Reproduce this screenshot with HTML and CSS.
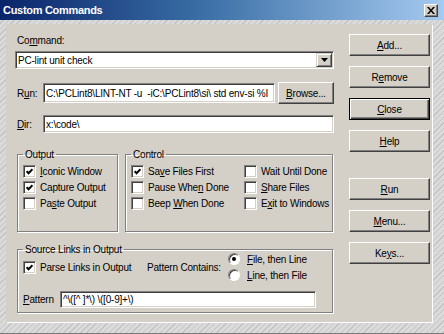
FILE: index.html
```html
<!DOCTYPE html>
<html lang="en">
<head>
    <meta charset="UTF-8">
    <title>Custom Commands</title>
    <link rel="stylesheet" href="styles.css">
</head>
<body>
    <div class="window">
        <div class="titlebar">
            <span class="title">Custom Commands</span>
            <span class="close-btn">
                <svg width="8" height="7" viewBox="0 0 8 7">
                    <path d="M0 0h2l2 2.4L6 0h2L5 3.5 8 7H6L4 4.6 2 7H0l3-3.5z" fill="#000"/>
                </svg>
            </span>
        </div>

        <div class="frame">
            <div class="panel">
                <div class="form">
                    <div class="label cmd-label">Co<u>m</u>mand:</div>
                    <div class="combo sunken">
                        <span class="combo-text">PC-lint unit check</span>
                        <span class="combo-drop">
                            <svg width="7" height="4" viewBox="0 0 7 4"><path d="M0 0h7L3.5 4z" fill="#000"/></svg>
                        </span>
                    </div>

                    <div class="field-row run-row">
                        <span class="label row-label">R<u>u</u>n:</span>
                        <div class="edit sunken run-edit">C:\PCLint8\LINT-NT -u  -iC:\PCLint8\si\ std env-si %I</div>
                        <button class="btn browse-btn"><u>B</u>rowse...</button>
                    </div>

                    <div class="field-row dir-row">
                        <span class="label row-label"><u>D</u>ir:</span>
                        <div class="edit sunken dir-edit">x:\code\</div>
                    </div>

                    <div class="groups">
                        <fieldset class="group output-group">
                            <legend>Output</legend>
                            <div class="check-item">
                                <span class="check sunken"><svg width="7" height="7" viewBox="0 0 7 7"><path d="M0.6 3.1 L2.6 5.2 L6.5 1.2" stroke="#000" stroke-width="2" fill="none"/></svg></span>
                                <span><u>I</u>conic Window</span>
                            </div>
                            <div class="check-item">
                                <span class="check sunken"><svg width="7" height="7" viewBox="0 0 7 7"><path d="M0.6 3.1 L2.6 5.2 L6.5 1.2" stroke="#000" stroke-width="2" fill="none"/></svg></span>
                                <span>Capture Output</span>
                            </div>
                            <div class="check-item">
                                <span class="check sunken"></span>
                                <span>Pa<u>s</u>te Output</span>
                            </div>
                        </fieldset>

                        <fieldset class="group control-group">
                            <legend>Control</legend>
                            <div class="check-grid">
                                <div class="check-item">
                                    <span class="check sunken"><svg width="7" height="7" viewBox="0 0 7 7"><path d="M0.6 3.1 L2.6 5.2 L6.5 1.2" stroke="#000" stroke-width="2" fill="none"/></svg></span>
                                    <span>Sa<u>v</u>e Files First</span>
                                </div>
                                <div class="check-item">
                                    <span class="check sunken"></span>
                                    <span>Pause Whe<u>n</u> Done</span>
                                </div>
                                <div class="check-item">
                                    <span class="check sunken"></span>
                                    <span>Beep <u>W</u>hen Done</span>
                                </div>
                                <div class="check-item">
                                    <span class="check sunken"></span>
                                    <span>Wait Until Done</span>
                                </div>
                                <div class="check-item">
                                    <span class="check sunken"></span>
                                    <span><u>S</u>hare Files</span>
                                </div>
                                <div class="check-item">
                                    <span class="check sunken"></span>
                                    <span>E<u>x</u>it to Windows</span>
                                </div>
                            </div>
                        </fieldset>
                    </div>

                    <fieldset class="group source-group">
                        <legend>Source Links in Output</legend>
                        <div class="source-top">
                            <div class="check-item parse-item">
                                <span class="check sunken"><svg width="7" height="7" viewBox="0 0 7 7"><path d="M0.6 3.1 L2.6 5.2 L6.5 1.2" stroke="#000" stroke-width="2" fill="none"/></svg></span>
                                <span>Parse Links in Output</span>
                            </div>
                            <span class="contains-label">Pattern Contains:</span>
                            <div class="radio-list">
                                <div class="radio-item">
                                    <span class="radio on"></span>
                                    <span><u>F</u>ile, then Line</span>
                                </div>
                                <div class="radio-item">
                                    <span class="radio"></span>
                                    <span><u>L</u>ine, then File</span>
                                </div>
                            </div>
                        </div>
                        <div class="pattern-row">
                            <span class="pattern-label"><u>P</u>attern</span>
                            <div class="edit sunken pattern-edit">^\([^ ]*\) \([0-9]+\)</div>
                        </div>
                    </fieldset>
                </div>

                <div class="buttons">
                    <button class="btn"><u>A</u>dd...</button>
                    <button class="btn">R<u>e</u>move</button>
                    <button class="btn btn-default"><u>C</u>lose</button>
                    <button class="btn"><u>H</u>elp</button>
                    <button class="btn run-btn"><u>R</u>un</button>
                    <button class="btn"><u>M</u>enu...</button>
                    <button class="btn">Ke<u>y</u>s...</button>
                </div>
            </div>
        </div>
    </div>
</body>
</html>
```

FILE: styles.css
```css
* {
    margin: 0;
    padding: 0;
    box-sizing: border-box;
}

body {
    font-family: 'Liberation Sans', Arial, sans-serif;
    font-size: 10px;
    letter-spacing: -0.2px;
    color: #000000;
    background: #d6d6d6;
}

u {
    text-decoration-thickness: 1px;
    text-underline-offset: 1px;
}

/* Window chrome */
.window {
    width: 444px;
    height: 334px;
    display: flex;
    flex-direction: column;
    background: repeating-linear-gradient(135deg, #c4c4c4 0 1px, #dadada 1px 4px);
    border-bottom: 1px solid #7a7a7a;
}

.titlebar {
    height: 20px;
    display: flex;
    justify-content: space-between;
    align-items: center;
    padding-left: 3px;
    background: linear-gradient(90deg, #0a246a 0%, #3a6ea5 45%, #a6caf0 100%);
}

.title {
    color: #FFFFFF;
    font-size: 11px;
    font-weight: bold;
    letter-spacing: -0.3px;
}

.close-btn {
    width: 14px;
    height: 13px;
    margin-right: 6px;
    display: flex;
    justify-content: center;
    align-items: center;
    background: #d4d0c8;
    border: 1px solid;
    border-color: #ffffff #404040 #404040 #ffffff;
    box-shadow: inset -1px -1px 0 #808080;
}

.frame {
    flex: 1;
    padding: 4px 0 0 6px;
}

.panel {
    width: 426px;
    height: 298px;
    display: flex;
    gap: 15px;
    padding: 10px 0 0 9px;
    background: #d4d0c8;
    box-shadow: 1px 1px 0 #ffffff;
}

/* Shared control styles */
.sunken {
    background: #ffffff;
    border: 1px solid;
    border-color: #808080 #ffffff #ffffff #808080;
    box-shadow: inset 1px 1px 0 #404040, inset -1px -1px 0 #d4d0c8;
}

.btn {
    height: 22px;
    font-family: inherit;
    font-size: 10px;
    letter-spacing: -0.2px;
    color: #000000;
    background: #d4d0c8;
    border: 1px solid;
    border-color: #ffffff #404040 #404040 #ffffff;
    box-shadow: inset -1px -1px 0 #808080;
}

.btn-default {
    border-color: #000000;
    box-shadow: inset 1px 1px 0 #ffffff, inset -1px -1px 0 #404040, inset -2px -2px 0 #808080;
}

.label {
    line-height: 13px;
}

/* Left form */
.form {
    width: 319px;
    display: flex;
    flex-direction: column;
}

.cmd-label {
    padding-left: 2px;
}

.combo {
    margin-top: 4px;
    height: 18px;
    display: flex;
    align-items: center;
}

.combo-text {
    flex: 1;
    padding-left: 2px;
}

.combo-drop {
    width: 16px;
    height: 14px;
    margin-right: 1px;
    display: flex;
    justify-content: center;
    align-items: center;
    background: #d4d0c8;
    border: 1px solid;
    border-color: #d4d0c8 #404040 #404040 #d4d0c8;
    box-shadow: inset 1px 1px 0 #ffffff, inset -1px -1px 0 #808080;
}

.field-row {
    display: flex;
    align-items: center;
}

.row-label {
    width: 28px;
    padding-left: 2px;
}

.edit {
    padding-left: 2px;
    white-space: pre;
    overflow: hidden;
    display: flex;
    align-items: center;
}

.run-row {
    margin-top: 13px;
    height: 22px;
}

.run-edit {
    width: 232px;
    height: 20px;
}

.browse-btn {
    width: 56px;
    margin-left: 3px;
}

.dir-row {
    margin-top: 11px;
    height: 18px;
}

.dir-edit {
    width: 291px;
    height: 18px;
}

/* Group boxes */
.group {
    border: 1px solid #808080;
    box-shadow: inset 1px 1px 0 #ffffff, 1px 1px 0 #ffffff;
    padding: 2px 4px 0 5px;
    min-width: 0;
}

.group legend {
    padding: 0 2px;
    line-height: 13px;
}

.groups {
    display: flex;
    gap: 7px;
    margin-top: 15px;
    margin-left: 2px;
}

.output-group {
    width: 101px;
    height: 84px;
}

.control-group {
    width: 208px;
    height: 84px;
}

.check-grid {
    display: grid;
    grid-template-columns: 113px 1fr;
    grid-template-rows: repeat(3, 16px);
    grid-auto-flow: column;
}

.check-item {
    height: 16px;
    display: flex;
    align-items: center;
    gap: 4px;
    white-space: nowrap;
}

.check {
    width: 13px;
    height: 13px;
    flex-shrink: 0;
    display: flex;
    justify-content: center;
    align-items: center;
}

.source-group {
    width: 316px;
    height: 70px;
    margin-top: 11px;
    margin-left: 2px;
    padding-top: 0;
}

.source-top {
    height: 32px;
    margin-top: -5px;
    display: flex;
    align-items: center;
}

.parse-item {
    width: 124px;
}

.contains-label {
    width: 81px;
}

.radio-item {
    height: 16px;
    display: flex;
    align-items: center;
    gap: 7px;
}

.radio {
    width: 12px;
    height: 12px;
    border-radius: 50%;
    border: 1px solid;
    border-color: #808080 #ffffff #ffffff #808080;
    box-shadow: inset 1px 1px 0 #404040;
    background: #ffffff;
    display: flex;
    justify-content: center;
    align-items: center;
}

.radio.on::after {
    content: '';
    width: 4px;
    height: 4px;
    border-radius: 50%;
    background: #000000;
}

.pattern-row {
    margin-top: 8px;
    display: flex;
    align-items: center;
}

.pattern-label {
    width: 37px;
}

.pattern-edit {
    width: 256px;
    height: 17px;
}

/* Right button column */
.buttons {
    width: 81px;
    display: flex;
    flex-direction: column;
    gap: 10px;
}

.run-btn {
    margin-top: 16px;
}
```
